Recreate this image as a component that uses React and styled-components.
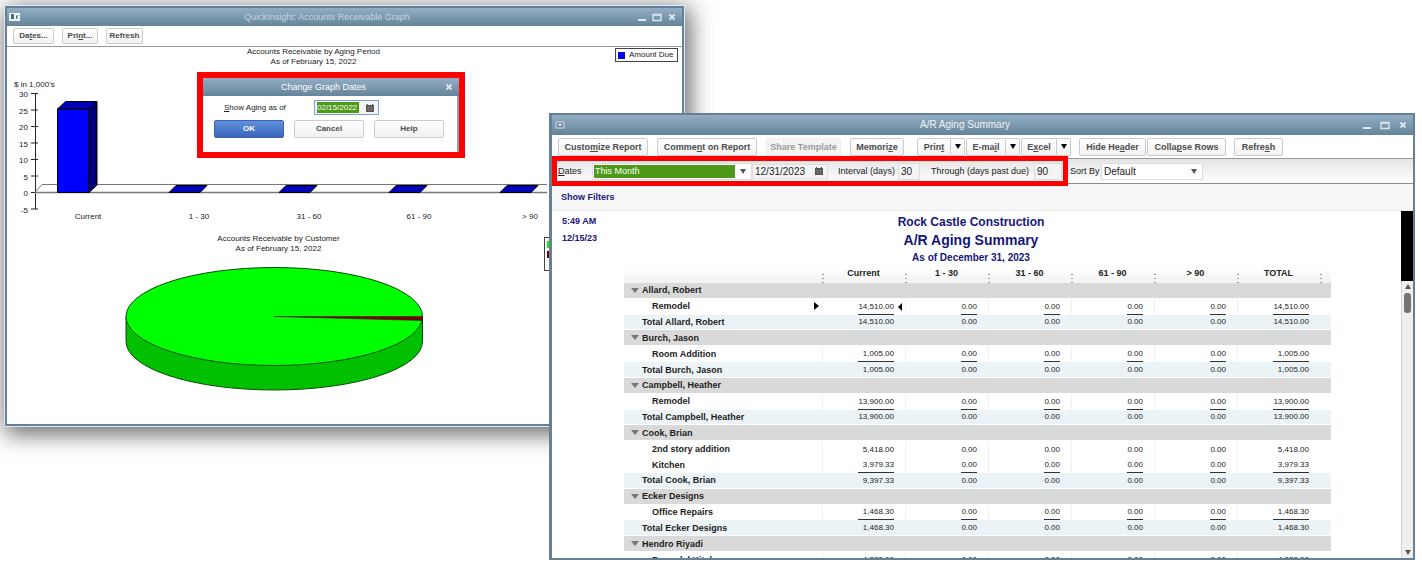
import React from 'react';
import styled, { createGlobalStyle, css } from 'styled-components';

const GlobalStyle = createGlobalStyle`
    * {
        box-sizing: border-box;
    }
    body {
        margin: 0;
        background: #fff;
        color: #222;
        font-family: 'Liberation Sans', Arial, sans-serif;
        font-size: 9px;
        line-height: 10px;
    }
    button, input, select {
        font-family: inherit;
        margin: 0;
        padding: 0;
    }
`;

const Desktop = styled.main`
    display: grid;
    grid-template-columns: 544fr 135fr 731fr;
    grid-template-rows: minmax(0, 1fr);
    height: 100vh;
    padding: 6px 7px 5px 5px;
    overflow: hidden;
`;

const Window = styled.section`
    display: flex;
    flex-direction: column;
    position: relative;
    min-width: 0;
    background: #fff;
    border: 2px solid #648199;
`;

const GraphWindow = styled(Window)`
    grid-column: 1 / 3;
    grid-row: 1;
    align-self: start;
    box-shadow: 0 0 0 1px #dfe9f2, 3px 5px 22px 3px rgba(0, 0, 0, 0.6);
`;

const ReportWindow = styled(Window)`
    grid-column: 2 / 4;
    grid-row: 1;
    margin-top: 107px;
    border-left-width: 3px;
`;

const TitleBar = styled.header`
    display: grid;
    grid-template-columns: 60px 1fr ${(p) => p.$end || 92}px;
    align-items: center;
    flex: none;
    height: ${(p) => p.$height || 20}px;
    padding: 0 5px 0 2px;
    background: linear-gradient(#93aec4, #64849a);
    h1, h2 {
        margin: 0;
        font-size: ${(p) => p.$size || 9}px;
        font-weight: normal;
        text-align: center;
        white-space: nowrap;
        color: ${(p) => p.$color || '#fff'};
    }
    svg {
        display: block;
    }
`;

const WindowControls = styled.div`
    display: flex;
    gap: ${(p) => p.$gap || 6}px;
    justify-content: flex-end;
`;

const ControlButton = styled.button`
    width: 10px;
    height: 10px;
    border: 0;
    background: none;
    color: #dfe6ec;
`;

const Toolbar = styled.div`
    display: flex;
    align-items: center;
    flex: none;
    height: ${(p) => p.$height}px;
    padding: 0 6px;
    border-bottom: 1px solid #999;
`;

const Group = styled.div`
    display: flex;
    gap: ${(p) => p.$gap || 1}px;
    margin-right: ${(p) => p.$after || 0}px;
`;

const Button = styled.button`
    flex: none;
    width: ${(p) => p.$width}px;
    height: ${(p) => p.$height || 18}px;
    border: 1px solid #ccc;
    border-radius: 2px;
    background: linear-gradient(#fff, #f1f1f1);
    color: #4c4c4c;
    font-size: ${(p) => (p.$small ? 8 : 9)}px;
    font-weight: bold;
    line-height: 12px;
    white-space: nowrap;
    ${(p) =>
        p.$primary &&
        css`
            border-color: #3c62ae;
            background: linear-gradient(#5f90dc, #3c65bd);
            color: #fff;
        `}
    &:disabled {
        border-color: #eee;
        background: #f4f4f4;
        color: #9a9a9a;
    }
`;

const SplitButton = styled.div`
    display: flex;
    button:first-child {
        border-radius: 2px 0 0 2px;
    }
    button:last-child {
        border-left: 0;
        border-radius: 0 2px 2px 0;
    }
    svg {
        display: block;
        margin: 0 auto;
    }
`;

const Graphs = styled.div`
    padding-bottom: 32px;
`;

const GraphTitle = styled.h2`
    margin: ${(p) => p.$top || 0}px ${(p) => p.$right}px 0 0;
    color: #222;
    font-size: 8px;
    font-weight: normal;
    line-height: 10px;
    text-align: center;
`;

const Plot = styled.svg`
    display: block;
    margin-top: 11px;
    text {
        font-size: 8px;
        fill: #222;
    }
`;

const Legend = styled.div`
    position: absolute;
    top: ${(p) => p.$top}px;
    right: ${(p) => p.$right}px;
    width: ${(p) => p.$width}px;
    padding: 1px 2px;
    border: 1px solid #444;
    background: #fff;
    font-size: 8px;
`;

const LegendItem = styled.div`
    display: flex;
    align-items: center;
    gap: 4px;
    height: 10px;
    white-space: nowrap;
    &::before {
        content: '';
        flex: none;
        width: 7px;
        height: 7px;
        background: ${(p) => p.$color};
    }
`;

const Dialog = styled.div`
    position: absolute;
    top: 64px;
    left: 190px;
    width: 268px;
    border: 6px solid #f00;
    background: #fff;
`;

const DialogBody = styled.form`
    display: grid;
    gap: 5px;
    padding: 4px 11px 14px;
    border-right: 2px solid #8b9fae;
`;

const DialogField = styled.div`
    display: flex;
    align-items: center;
    padding-left: 10px;
    font-size: 8px;
    label {
        width: 90px;
    }
`;

const DateField = styled.div`
    display: flex;
    align-items: center;
    justify-content: space-between;
    flex: none;
    width: ${(p) => p.$width}px;
    height: 15px;
    padding: 1px 2px;
    border: 1px solid ${(p) => (p.$active ? '#7e9fd6' : '#ddd')};
    background: #f4f4f4;
    input {
        width: ${(p) => p.$text}px;
        height: 11px;
        border: 0;
        outline: 0;
        background: ${(p) => (p.$active ? '#4c9a17' : 'transparent')};
        color: ${(p) => (p.$active ? '#fff' : '#222')};
        font-size: ${(p) => (p.$active ? 8 : 10)}px;
    }
    svg {
        flex: none;
        margin-right: 2px;
    }
`;

const FilterBar = styled.div`
    display: flex;
    align-items: center;
    flex: none;
    height: 25px;
    border-bottom: 1px solid #8c8c8c;
    background: linear-gradient(#e4e4e4, #fff);
    line-height: 12px;
    white-space: nowrap;
`;

const MarkedFilters = styled.div`
    position: relative;
    display: flex;
    align-items: center;
    flex: none;
    width: 516px;
    height: 30px;
    margin-right: 2px;
    padding-left: 6px;
    &::after {
        content: '';
        position: absolute;
        inset: 0;
        border: 5px solid #f00;
        pointer-events: none;
    }
`;

const FilterLabel = styled.label`
    flex: none;
    width: ${(p) => p.$width}px;
`;

const SelectBox = styled.div`
    position: relative;
    width: ${(p) => p.$width}px;
    height: 17px;
    padding: 1px;
    border: 1px solid #ddd;
    background: #fff;
    select {
        display: block;
        width: 100%;
        height: 13px;
        padding: 0 1px;
        border: 0;
        outline: 0;
        appearance: none;
        color: ${(p) => (p.$marked ? '#fff' : '#222')};
        background: ${(p) =>
            p.$marked
                ? 'linear-gradient(to left, #fff 15px, #4c9a17 15px)'
                : '#fff'};
        font-size: ${(p) => (p.$marked ? 9 : 10)}px;
        line-height: 13px;
    }
    svg {
        position: absolute;
        top: 5px;
        right: 5px;
        pointer-events: none;
    }
`;

const NumberInput = styled.input`
    flex: none;
    width: ${(p) => p.$width}px;
    height: 17px;
    margin-right: ${(p) => p.$after || 0}px;
    border: 1px solid #ddd;
    background: #f4f4f4;
    color: #222;
    font-size: 10px;
    text-indent: 2px;
`;

const FiltersLink = styled.div`
    flex: none;
    height: 27px;
    padding: 7px 9px;
    border-bottom: 1px solid #eee;
    background: #f7f7f7;
    a {
        color: #15157d;
        font-size: 9px;
        font-weight: bold;
        line-height: 12px;
        text-decoration: none;
    }
`;

const ReportArea = styled.div`
    display: flex;
    flex: 1;
    min-height: 0;
`;

const Report = styled.article`
    flex: 1;
    min-width: 0;
    overflow: hidden;
`;

const ReportHead = styled.header`
    display: grid;
    grid-template-columns: 72px 1fr 72px;
    padding: 2px 11px 0 0;
    color: #15157d;
    font-weight: bold;
`;

const Stamp = styled.div`
    padding-left: 10px;
    line-height: 17px;
`;

const Titles = styled.div`
    text-align: center;
    h2, h3, p {
        margin: 0;
    }
    h2 {
        font-size: 12px;
        line-height: 18px;
    }
    h3 {
        font-size: 14px;
        line-height: 19px;
    }
    p {
        font-size: 10px;
        line-height: 15px;
    }
`;

const Table = styled.table`
    table-layout: fixed;
    width: calc(100% - 142px);
    height: 300px;
    margin: 3px 0 0 72px;
    border-collapse: separate;
    border-spacing: 0;
    th, td {
        padding: 0;
    }
    thead th {
        height: 15px;
        background: linear-gradient(#fff, #f2f2f2);
        vertical-align: top;
        color: #222;
    }
    thead th + th {
        background: repeating-linear-gradient(#999 0 1px, transparent 1px 4px) 0 6px / 2px 9px no-repeat,
            linear-gradient(#fff, #f2f2f2);
    }
`;

const indent = { group: 7, detail: 28, total: 18 };
const rowColor = { group: '#d9d9d9', detail: '#fff', total: '#ecf3f6' };

const Row = styled.tr`
    background: ${(p) => rowColor[p.$kind]};
    th, td {
        height: 15px;
    }
    th {
        padding-left: ${(p) => indent[p.$kind]}px;
        border-bottom: 1px solid #fff;
        text-align: left;
        white-space: nowrap;
        color: #1c1c1c;
    }
    td {
        padding-right: 11px;
        border-bottom: ${(p) => (p.$kind === 'detail' ? 0 : '1px solid #fff')};
        border-left: ${(p) => (p.$kind === 'detail' ? '1px solid #f0f0f0' : 0)};
        text-align: right;
        vertical-align: bottom;
        font-size: 8px;
    }
    td:last-child {
        padding: 0;
        border-left: 0;
    }
`;

const Amount = styled.span`
    display: block;
    width: ${(p) => (p.$wide ? 36 : 16)}px;
    margin-left: auto;
    line-height: ${(p) => (p.$plain ? 15 : 14)}px;
    border-bottom: ${(p) => (p.$ruled ? '1px solid #333' : 0)};
`;

const Toggle = styled.button`
    width: 11px;
    height: 10px;
    border: 0;
    background: none;
    vertical-align: top;
    svg {
        display: block;
    }
`;

const RowName = styled.span`
    display: flex;
    align-items: center;
    justify-content: space-between;
    padding-right: 3px;
`;

const MarkedCell = styled.td`
    background: url("data:image/svg+xml,%3Csvg xmlns='http://www.w3.org/2000/svg' width='4' height='8'%3E%3Cpath d='M4 0v8L0 4z'/%3E%3C/svg%3E")
        right 3px center no-repeat;
`;

const ScrollColumn = styled.div`
    display: flex;
    flex-direction: column;
    flex: none;
    width: 12px;
    border-left: 1px solid #d5d5d5;
    background: #efefef;
`;

const BlackStrip = styled.div`
    height: 70px;
    margin-left: -1px;
    background: #000;
`;

const ScrollTrack = styled.div`
    display: flex;
    flex: 1;
    flex-direction: column;
    align-items: center;
    padding: 3px 0;
`;

const Thumb = styled.div`
    width: 7px;
    height: 20px;
    margin: 4px 0 auto;
    border-radius: 3px;
    background: #737373;
`;

const Minimize = () => (
    <svg width="10" height="10" viewBox="0 0 10 10">
        <path d="M1 8h8" stroke="currentColor" strokeWidth="2" />
    </svg>
);

const Maximize = () => (
    <svg width="10" height="10" viewBox="0 0 10 10">
        <path d="M1 2.5h8v6H1zM1 3h8" fill="none" stroke="currentColor" strokeWidth="1.4" />
    </svg>
);

const Close = () => (
    <svg width="10" height="10" viewBox="0 0 10 10">
        <path d="M2.5 2.5l5 5M7.5 2.5l-5 5" stroke="currentColor" strokeWidth="1.8" />
    </svg>
);

const Calendar = () => (
    <svg width="8" height="8" viewBox="0 0 8 8">
        <path d="M0 1h8v7H0z" fill="#555" />
        <path d="M1.5 0v2M6.5 0v2" stroke="#555" />
        <path d="M1 3.5h6M1 5.5h6M2.5 2v5M5.5 2v5" stroke="#888" strokeWidth=".5" />
    </svg>
);

const Arrow = ({ up, color = '#222', width = 6 }) => (
    <svg width={width} height="5" viewBox="0 0 6 5" preserveAspectRatio="none">
        <path d={up ? 'M0 5h6L3 0z' : 'M0 0h6L3 5z'} fill={color} />
    </svg>
);

const Controls = ({ gap }) => (
    <WindowControls $gap={gap}>
        <ControlButton aria-label="Minimize"><Minimize /></ControlButton>
        <ControlButton aria-label="Maximize"><Maximize /></ControlButton>
        <ControlButton aria-label="Close"><Close /></ControlButton>
    </WindowControls>
);

const Split = ({ label, width, children }) => (
    <SplitButton>
        <Button $width={width}>{children}</Button>
        <Button $width={14} aria-label={label}><Arrow color="#000" /></Button>
    </SplitButton>
);

const ticks = [30, 25, 20, 15, 10, 5, 0, -5];
const periods = [
    { name: 'Current', x: 88 },
    { name: '1 - 30', x: 199 },
    { name: '31 - 60', x: 309 },
    { name: '61 - 90', x: 419 },
    { name: '> 90', x: 530 },
];

const BarChart = () => (
    <Plot width="540" height="144" viewBox="7 78 540 144">
        <text x="14" y="87">$ in 1,000's</text>
        <path d="M35.5 94v115" stroke="#222" />
        {ticks.map((value, i) => (
            <g key={value}>
                <path d={`M31 ${93.5 + i * 16.5}h7`} stroke="#222" />
                <text x="28" y={97 + i * 16.5} textAnchor="end">{value}</text>
            </g>
        ))}
        <path d="M35 192.5l7-8h510" fill="none" stroke="#777" />
        <path d="M35 192.5h520" stroke="#777" strokeWidth="1.5" />
        <g stroke="#000" strokeLinejoin="round">
            <path d="M57.5 109l8-7.5h31l-7.5 7.5z" fill="#0000b4" />
            <path d="M89 109l8-7.5v83.5l-8 7.5z" fill="#00007c" />
            <path d="M57.5 109h31.5v83.5h-31.5z" fill="#00f" />
            {periods.slice(1).map(({ x }) => (
                <path key={x} d={`M${x - 30} 192.5l7-7h31l-7 7z`} fill="#0000b4" />
            ))}
        </g>
        {periods.map(({ name, x }) => (
            <text key={name} x={x} y="219" textAnchor="middle">{name}</text>
        ))}
    </Plot>
);

const PieChart = () => (
    <Plot width="540" height="127" viewBox="7 265 540 127">
        <path
            d="M126 316.5v25a148.25 48.5 0 0 0 296.5 0v-25z"
            fill="#00c000"
            stroke="#064d06"
        />
        <ellipse cx="274.25" cy="316.5" rx="148.25" ry="49" fill="#0f0" stroke="#064d06" />
        <path d="M274 316.5h148.5v4z" fill="#7a0000" stroke="#402000" strokeWidth=".6" />
    </Plot>
);

const rows = [
    { kind: 'group', name: 'Allard, Robert' },
    { kind: 'detail', name: 'Remodel', amount: '14,510.00', ruled: true, marked: true },
    { kind: 'total', name: 'Total Allard, Robert', amount: '14,510.00' },
    { kind: 'group', name: 'Burch, Jason' },
    { kind: 'detail', name: 'Room Addition', amount: '1,005.00', ruled: true },
    { kind: 'total', name: 'Total Burch, Jason', amount: '1,005.00' },
    { kind: 'group', name: 'Campbell, Heather' },
    { kind: 'detail', name: 'Remodel', amount: '13,900.00', ruled: true },
    { kind: 'total', name: 'Total Campbell, Heather', amount: '13,900.00' },
    { kind: 'group', name: 'Cook, Brian' },
    { kind: 'detail', name: '2nd story addition', amount: '5,418.00' },
    { kind: 'detail', name: 'Kitchen', amount: '3,979.33', ruled: true },
    { kind: 'total', name: 'Total Cook, Brian', amount: '9,397.33' },
    { kind: 'group', name: 'Ecker Designs' },
    { kind: 'detail', name: 'Office Repairs', amount: '1,468.30', ruled: true },
    { kind: 'total', name: 'Total Ecker Designs', amount: '1,468.30' },
    { kind: 'group', name: 'Hendro Riyadi' },
    { kind: 'detail', name: 'Remodel Kitchen', amount: '4,223.00', ruled: true },
];

const ReportRow = ({ kind, name, amount, ruled, marked }) => {
    const FirstCell = marked ? MarkedCell : 'td';
    const plain = kind === 'detail' && !ruled;
    return (
        <Row $kind={kind}>
            <th scope="row">
                {kind === 'group' && (
                    <Toggle aria-label={`Collapse ${name}`}>
                        <Arrow color="#777" width={8} />
                    </Toggle>
                )}
                {marked ? (
                    <RowName>
                        {name}
                        <svg width="5" height="8"><path d="M0 0v8l5-4z" /></svg>
                    </RowName>
                ) : (
                    name
                )}
            </th>
            {amount ? (
                <>
                    <FirstCell><Amount $wide $ruled={ruled} $plain={plain}>{amount}</Amount></FirstCell>
                    {[1, 2, 3, 4].map((n) => (
                        <td key={n}><Amount $ruled={ruled} $plain={plain}>0.00</Amount></td>
                    ))}
                    <td><Amount $wide $ruled={ruled} $plain={plain}>{amount}</Amount></td>
                    <td />
                </>
            ) : (
                <td colSpan="7" />
            )}
        </Row>
    );
};

const GraphPanel = () => (
    <GraphWindow>
        <TitleBar $height={18} $color="#c9d6e0">
            <svg width="11" height="8" viewBox="0 0 11 8">
                <path d="M0 0h11v8H0z" fill="#f4f7f8" />
                <path d="M2 1h3v5H2z" fill="#38776f" />
                <path d="M7 3h1v3M9 2v1" stroke="#38776f" />
            </svg>
            <h1>QuickInsight: Accounts Receivable Graph</h1>
            <Controls gap={5} />
        </TitleBar>
        <Toolbar $height={21}>
            <Group $gap={8}>
                <Button $small $width={41} $height={16}>Da<u>t</u>es...</Button>
                <Button $small $width={36} $height={16}>Pri<u>n</u>t...</Button>
                <Button $small $width={37} $height={16}>Refresh</Button>
            </Group>
        </Toolbar>
        <Graphs>
            <GraphTitle $right={62}>Accounts Receivable by Aging Period<br />As of February 15, 2022</GraphTitle>
            <BarChart />
            <GraphTitle $top={12} $right={132}>
                Accounts Receivable by Customer<br />As of February 15, 2022
            </GraphTitle>
            <PieChart />
        </Graphs>
        <Legend $top={40} $right={4} $width={63}>
            <LegendItem $color="#00f">Amount Due</LegendItem>
        </Legend>
        <Legend $top={229} $right={30} $width={108}>
            <LegendItem $color="#0f0" />
            <LegendItem $color="#700" />
            <LegendItem $color="#fff" />
        </Legend>
        <Dialog role="dialog" aria-labelledby="dates-title">
            <TitleBar $height={18} $end={72}>
                <span />
                <h2 id="dates-title">Change Graph Dates</h2>
                <WindowControls>
                    <ControlButton aria-label="Close dialog"><Close /></ControlButton>
                </WindowControls>
            </TitleBar>
            <DialogBody onSubmit={(e) => e.preventDefault()}>
                <DialogField>
                    <label htmlFor="aging-date"><u>S</u>how Aging as of</label>
                    <DateField $active $width={65} $text={42}>
                        <input id="aging-date" defaultValue="02/15/2022" />
                        <Calendar />
                    </DateField>
                </DialogField>
                <Group $gap={10}>
                    <Button $small $primary $width={70}>OK</Button>
                    <Button $small type="button" $width={70}>Cancel</Button>
                    <Button $small type="button" $width={70}>Help</Button>
                </Group>
            </DialogBody>
        </Dialog>
    </GraphWindow>
);

const ReportPanel = () => (
    <ReportWindow>
        <TitleBar $height={20} $size={10} $color="#eef3f7">
            <svg width="11" height="8" viewBox="0 0 11 8">
                <path d="M2 1h8v6H2z" fill="#7890a4" stroke="#cfd9e1" />
                <path d="M4 3h4L6 5z" fill="#fff" />
            </svg>
            <h1>A/R Aging Summary</h1>
            <Controls gap={8} />
        </TitleBar>
        <Toolbar $height={24}>
            <Group $gap={9} $after={13}>
                <Button $width={90}>Custo<u>m</u>ize Report</Button>
                <Button $width={100}>Comme<u>n</u>t on Report</Button>
                <Button $width={75} disabled>Share Template</Button>
                <Button $width={54}>Memori<u>z</u>e</Button>
            </Group>
            <Group $gap={1} $after={8}>
                <Split width={34} label="Print options">Prin<u>t</u></Split>
                <Split width={40} label="E-mail options">E-ma<u>i</u>l</Split>
                <Split width={36} label="Excel options">E<u>x</u>cel</Split>
            </Group>
            <Group $gap={1} $after={8}>
                <Button $width={67}>Hide He<u>a</u>der</Button>
                <Button $width={79}>Colla<u>p</u>se Rows</Button>
            </Group>
            <Button $width={49}>Refre<u>s</u>h</Button>
        </Toolbar>
        <FilterBar>
            <MarkedFilters>
                <FilterLabel htmlFor="range" $width={34}><u>D</u>ates</FilterLabel>
                <SelectBox $width={160} $marked>
                    <select id="range" defaultValue="month">
                        <option value="month">This Month</option>
                    </select>
                    <Arrow color="#555" />
                </SelectBox>
                <Group $after={10}>
                    <DateField $width={76} $text={56}>
                        <input aria-label="As of date" defaultValue="12/31/2023" />
                        <Calendar />
                    </DateField>
                </Group>
                <FilterLabel htmlFor="interval" $width={60}>Interval (days)</FilterLabel>
                <NumberInput id="interval" $width={22} $after={11} defaultValue="30" />
                <FilterLabel htmlFor="through" $width={103}>Through (days past due)</FilterLabel>
                <NumberInput id="through" $width={28} defaultValue="90" />
            </MarkedFilters>
            <FilterLabel htmlFor="sort" $width={31}>Sort By</FilterLabel>
            <SelectBox $width={102}>
                <select id="sort" defaultValue="default">
                    <option value="default">Default</option>
                </select>
                <Arrow color="#555" />
            </SelectBox>
        </FilterBar>
        <FiltersLink><a href="#filters">Show Filters</a></FiltersLink>
        <ReportArea>
            <Report>
                <ReportHead>
                    <Stamp>5:49 AM<br />12/15/23</Stamp>
                    <Titles>
                        <h2>Rock Castle Construction</h2>
                        <h3>A/R Aging Summary</h3>
                        <p>As of December 31, 2023</p>
                    </Titles>
                </ReportHead>
                <Table>
                    <colgroup>
                        <col />
                        {[1, 2, 3, 4, 5, 6].map((n) => <col key={n} width="83" />)}
                        <col width="11" />
                    </colgroup>
                    <thead>
                        <tr>
                            <th />
                            {['Current', '1 - 30', '31 - 60', '61 - 90', '> 90', 'TOTAL'].map((name) => (
                                <th key={name} scope="col">{name}</th>
                            ))}
                            <th />
                        </tr>
                    </thead>
                    <tbody>
                        {rows.map((row, i) => <ReportRow key={i} {...row} />)}
                    </tbody>
                </Table>
            </Report>
            <ScrollColumn>
                <BlackStrip />
                <ScrollTrack>
                    <Arrow up color="#555" />
                    <Thumb />
                    <Arrow color="#555" />
                </ScrollTrack>
            </ScrollColumn>
        </ReportArea>
    </ReportWindow>
);

const App = () => (
    <>
        <GlobalStyle />
        <Desktop>
            <GraphPanel />
            <ReportPanel />
        </Desktop>
    </>
);

export default App;
